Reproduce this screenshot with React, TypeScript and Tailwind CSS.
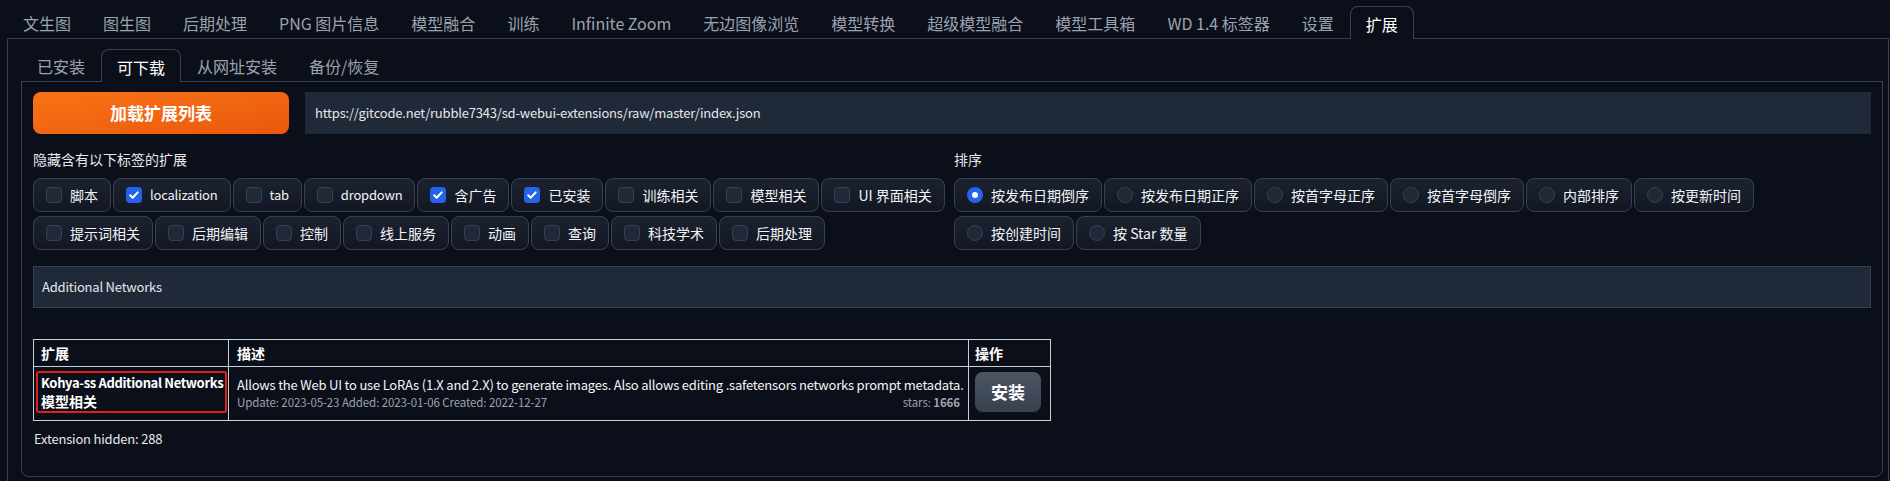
import React from "react";

const topTabs = [
  "文生图",
  "图生图",
  "后期处理",
  "PNG 图片信息",
  "模型融合",
  "训练",
  "Infinite Zoom",
  "无边图像浏览",
  "模型转换",
  "超级模型融合",
  "模型工具箱",
  "WD 1.4 标签器",
  "设置",
  "扩展",
];

const subTabs = ["已安装", "可下载", "从网址安装", "备份/恢复"];

// latin = label is plain latin text, drawn a little narrower like the original font
const tags: { label: string; checked: boolean; latin?: boolean }[] = [
  { label: "脚本", checked: false },
  { label: "localization", checked: true, latin: true },
  { label: "tab", checked: false, latin: true },
  { label: "dropdown", checked: false, latin: true },
  { label: "含广告", checked: true },
  { label: "已安装", checked: true },
  { label: "训练相关", checked: false },
  { label: "模型相关", checked: false },
  { label: "UI 界面相关", checked: false },
  { label: "提示词相关", checked: false },
  { label: "后期编辑", checked: false },
  { label: "控制", checked: false },
  { label: "线上服务", checked: false },
  { label: "动画", checked: false },
  { label: "查询", checked: false },
  { label: "科技学术", checked: false },
  { label: "后期处理", checked: false },
];

const sorts = [
  "按发布日期倒序",
  "按发布日期正序",
  "按首字母正序",
  "按首字母倒序",
  "内部排序",
  "按更新时间",
  "按创建时间",
  "按 Star 数量",
];

const Tab = ({ label, active }: { label: string; active?: boolean }) => (
  <div
    className={`h-[33px] px-[15px] pt-[1px] flex items-center text-[16px] whitespace-nowrap ${
      active
        ? "relative z-10 bg-[#0b0f19] text-white border border-b-0 border-[#374151] rounded-t-[8px]"
        : "text-[#9ca3af] border border-transparent"
    }`}
  >
    {label}
  </div>
);

const CheckBox = ({ checked }: { checked: boolean }) =>
  checked ? (
    <span className="w-4 h-4 rounded-[4px] bg-[#2563eb] flex items-center justify-center shrink-0">
      <svg viewBox="0 0 16 16" className="w-4 h-4" fill="none">
        <path
          d="M4.2 8.3l2.5 2.5 5-5.4"
          stroke="white"
          strokeWidth="2"
          strokeLinecap="round"
          strokeLinejoin="round"
        />
      </svg>
    </span>
  ) : (
    <span className="w-4 h-4 rounded-[4px] bg-[#1f2937] border border-[#374151] shrink-0" />
  );

const Radio = ({ checked }: { checked: boolean }) =>
  checked ? (
    <span className="w-4 h-4 rounded-full bg-[#2563eb] flex items-center justify-center shrink-0">
      <span className="w-[6px] h-[6px] rounded-full bg-white" />
    </span>
  ) : (
    <span className="w-4 h-4 rounded-full bg-[#1f2937] border border-[#374151] shrink-0" />
  );

const Chip = ({ children }: { children: React.ReactNode }) => (
  <label className="h-[34px] px-3 flex items-center gap-2 rounded-[8px] border border-[#374151] bg-linear-to-b from-[#1c2230] to-[#121723] text-[14px] text-[#f3f4f6] whitespace-nowrap">
    {children}
  </label>
);

export default function App() {
  return (
    <div className="min-h-[481px] bg-[#0b0f19] text-[#e5e7eb] font-['Noto_Sans_CJK_SC',sans-serif]">
      {/* top tabs */}
      <div className="flex pt-[6px] pl-[7px]">
        {topTabs.map((t) => (
          <Tab key={t} label={t} active={t === "扩展"} />
        ))}
      </div>

      <div className="-mt-px ml-[7px] mr-[1px] border border-[#374151] rounded-b-[8px] pt-[10px] pl-[13px] pr-[5px] pb-[10px]">
        {/* sub tabs */}
        <div className="flex">
          {subTabs.map((t) => (
            <Tab key={t} label={t} active={t === "可下载"} />
          ))}
        </div>

        <div className="-mt-px border border-[#374151] rounded-b-[8px] px-[11px] pt-[10px] pb-[27px]">
          <div className="flex gap-4">
            <button className="w-[256px] h-[42px] rounded-[8px] bg-linear-to-br from-[#f97316] to-[#ea580c] text-white text-[17px] font-bold">
              加载扩展列表
            </button>
            <div className="flex-1 h-[42px] bg-[#1f2937] px-[10px] flex items-center text-[13px] tracking-[-0.2px] text-[#e5e7eb]">
              https://gitcode.net/rubble7343/sd-webui-extensions/raw/master/index.json
            </div>
          </div>

          <div className="grid grid-cols-[921px_1fr] mt-[15px]">
            <div>
              <div className="text-[14px] leading-[20px]">隐藏含有以下标签的扩展</div>
              <div className="mt-[9px] flex flex-wrap gap-x-[2px] gap-y-[4px]">
                {tags.map((t) => (
                  <Chip key={t.label}>
                    <CheckBox checked={t.checked} />
                    <span className={t.latin ? "text-[13px] tracking-[-0.2px]" : ""}>{t.label}</span>
                  </Chip>
                ))}
              </div>
            </div>
            <div>
              <div className="text-[14px] leading-[20px]">排序</div>
              <div className="mt-[9px] flex flex-wrap gap-x-[2px] gap-y-[4px]">
                {sorts.map((s, i) => (
                  <Chip key={s}>
                    <Radio checked={i === 0} />
                    <span>{s}</span>
                  </Chip>
                ))}
              </div>
            </div>
          </div>

          <div className="mt-4 h-[42px] bg-[#1f2937] border border-[#374151] flex items-center px-2 text-[13px] tracking-[-0.2px] text-[#e5e7eb]">
            Additional Networks
          </div>

          <table className="mt-[31px] w-[1017px] table-fixed border-collapse text-[14px]">
            <colgroup>
              <col className="w-[195px]" />
              <col className="w-[740px]" />
              <col className="w-[82px]" />
            </colgroup>
            <thead>
              <tr>
                <th className="border border-[#c9cdd4] h-[27px] px-[7px] text-left font-bold text-white leading-[19px]">扩展</th>
                <th className="border border-[#c9cdd4] h-[27px] px-[8px] text-left font-bold text-white leading-[19px]">描述</th>
                <th className="border border-[#c9cdd4] h-[27px] px-[6px] text-left font-bold text-white leading-[19px]">操作</th>
              </tr>
            </thead>
            <tbody>
              <tr>
                <td className="border border-[#c9cdd4] align-top pt-[4px] pl-[2px] pr-[1px] pb-[7px]">
                  <div className="border-2 border-[#e0201c] rounded-[3px] px-[3px] leading-[19px] font-bold text-white whitespace-nowrap">
                    <div className="text-[13px] tracking-[-0.35px]">Kohya-ss Additional Networks</div>
                    <div>模型相关</div>
                  </div>
                </td>
                <td className="border border-[#c9cdd4] align-top pt-[8px] px-[8px]">
                  <div className="leading-[19px] text-[13px] tracking-[-0.2px] text-[#f3f4f6] whitespace-nowrap">
                    Allows the Web UI to use LoRAs (1.X and 2.X) to generate images. Also allows editing .safetensors networks prompt metadata.
                  </div>
                  <div className="flex justify-between text-[11.5px] tracking-[-0.1px] leading-[16px] text-[#9ca3af]">
                    <span>Update: 2023-05-23 Added: 2023-01-06 Created: 2022-12-27</span>
                    <span>
                      stars: <b className="font-bold">1666</b>
                    </span>
                  </div>
                </td>
                <td className="border border-[#c9cdd4] align-top pt-[5px] pl-[6px]">
                  <button className="w-[66px] h-[40px] rounded-[8px] bg-linear-to-b from-[#4b5563] to-[#394150] text-white text-[17px] font-bold">
                    安装
                  </button>
                </td>
              </tr>
            </tbody>
          </table>

          <div className="mt-[8px] text-[13px] tracking-[-0.2px] leading-[20px] pl-px">Extension hidden: 288</div>
        </div>
      </div>
    </div>
  );
}
